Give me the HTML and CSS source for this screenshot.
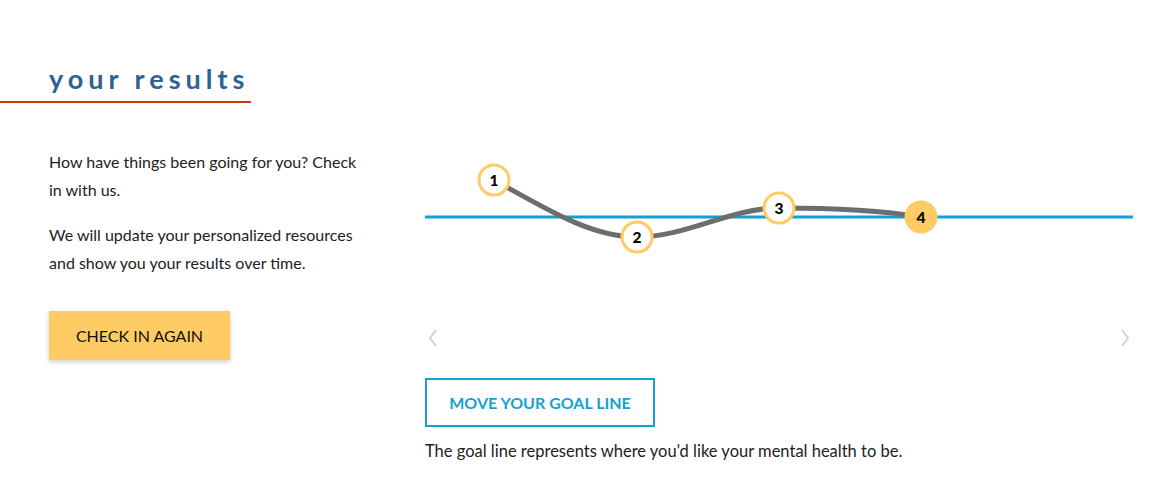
FILE: index.html
```html
<!DOCTYPE html>
<html lang="en">
<head>
<meta charset="utf-8">
<title>your results</title>
<link rel="stylesheet" href="styles.css">
</head>
<body>
<header class="title-wrap">
  <h1 class="title">your results</h1>
</header>
<main class="content">
  <section class="intro">
    <p>How have things been going for you? Check in with us.</p>
    <p>We will update your personalized resources and show you your results over time.</p>
    <button class="btn-primary">CHECK IN AGAIN</button>
  </section>
  <section class="results">
    <svg class="chart" width="708" height="160" viewBox="0 0 708 160">
      <line x1="0" y1="69" x2="708" y2="69" stroke="#14a0d2" stroke-width="3"/>
      <path d="M69,32 C120,60 165,89 212,89 C262,89 305,60 354,60 C420,60 460,63 496,69" fill="none" stroke="#6d6d6d" stroke-width="5"/>
      <g class="pt">
        <circle cx="69" cy="32" r="15" fill="#fff" stroke="#ffcb65" stroke-width="3"/>
        <text x="69" y="37.5">1</text>
      </g>
      <g class="pt">
        <circle cx="212" cy="89" r="15" fill="#fff" stroke="#ffcb65" stroke-width="3"/>
        <text x="212" y="94.5">2</text>
      </g>
      <g class="pt">
        <circle cx="354" cy="60" r="15" fill="#fff" stroke="#ffcb65" stroke-width="3"/>
        <text x="354" y="65.5">3</text>
      </g>
      <g class="pt">
        <circle cx="496" cy="69" r="16.5" fill="#ffcb65"/>
        <text x="496" y="74.5">4</text>
      </g>
    </svg>
    <div class="nav">
      <svg width="10" height="18" viewBox="0 0 10 18"><path d="M8,1 L2,9 L8,17" fill="none" stroke="#d0d0d0" stroke-width="2"/></svg>
      <svg width="10" height="18" viewBox="0 0 10 18"><path d="M2,1 L8,9 L2,17" fill="none" stroke="#d0d0d0" stroke-width="2"/></svg>
    </div>
    <button class="btn-outline">MOVE YOUR GOAL LINE</button>
    <p class="caption">The goal line represents where you'd like your mental health to be.</p>
  </section>
</main>
</body>
</html>
```
FILE: styles.css
```css
* { box-sizing: border-box; }
body {
  margin: 0;
  font-family: "Lato", "Liberation Sans", sans-serif;
  color: #222;
  background: #fff;
}
.title-wrap {
  width: 251px;
  padding: 62px 0 5px 49px;
  border-bottom: 2px solid #cc3d0c;
}
.title {
  margin: 0;
  font-size: 27px;
  line-height: 34px;
  font-weight: 700;
  letter-spacing: 5px;
  color: #2f6195;
  white-space: nowrap;
}
.content {
  display: flex;
  margin-top: 45px;
}
.intro {
  flex: 0 0 425px;
  padding-left: 49px;
  padding-right: 53px;
}
.intro p {
  margin: 0 0 17px;
  font-size: 16px;
  line-height: 28px;
}
.btn-primary {
  margin-top: 17px;
  width: 181px;
  height: 49px;
  border: none;
  background: #ffcb65;
  box-shadow: 0 2px 5px rgba(0,0,0,0.2);
  font-family: inherit;
  font-size: 16px;
  color: #111;
  padding: 0;
}
.results {
  flex: 0 0 708px;
}
.chart {
  display: block;
}
.pt text {
  font-family: "Lato", sans-serif;
  font-weight: 900;
  font-size: 15.5px;
  text-anchor: middle;
  fill: #000;
}
.nav {
  height: 60px;
  display: flex;
  justify-content: space-between;
  align-items: center;
  padding: 0 3px 0 3px;
}
.btn-outline {
  margin-top: 10px;
  width: 230px;
  height: 49px;
  border: 2px solid #1a9fd0;
  background: #fff;
  color: #1a9fd0;
  font-family: inherit;
  font-weight: 700;
  font-size: 16px;
  padding: 0;
}
.caption {
  margin: 10px 0 0;
  font-size: 16.5px;
  line-height: 28px;
}
```
